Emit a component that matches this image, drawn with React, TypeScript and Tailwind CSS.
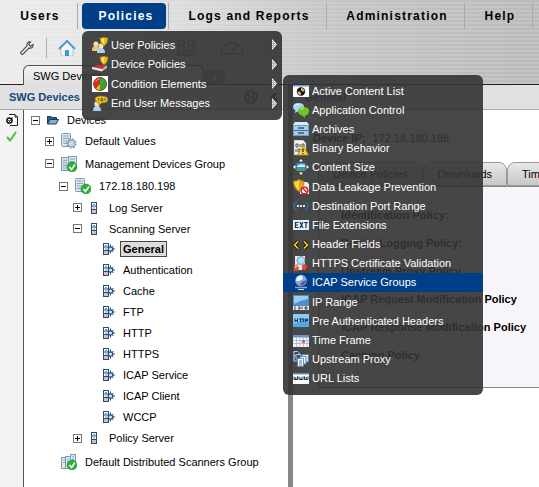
import type { ReactNode } from 'react';
import { clsx } from 'clsx';

/* ---------- icons ---------- */

interface IconProps {
  children: ReactNode;
  size?: string;
  box?: string;
}

function Icon({ children, size = 'w-4 h-4', box = '0 0 16 16' }: IconProps) {
  return (
    <svg viewBox={box} className={clsx('block shrink-0', size)} aria-hidden="true">
      {children}
    </svg>
  );
}

function Shield({ x = 0, y = 0 }: { x?: number; y?: number }) {
  return (
    <g transform={`translate(${x} ${y})`}>
      <path d="M0 1Q3 1 4 0Q5 1 8 1Q8 6 4 9Q0 6 0 1Z" fill="#eebc20" stroke="#a87808" strokeWidth=".6" />
      <path d="M1 2Q3 2 4 1V7Q1 5 1 2Z" fill="#ffe46a" />
    </g>
  );
}

function UserPoliciesIcon() {
  return (
    <Icon>
      <path d="M0 13Q0 9 3.500 9Q7 9 8 12V14H0Z" fill="#e8c978" />
      <circle cx="4" cy="7" r="2.6" fill="#f7dcb0" />
      <path d="M5 16Q5 11 9 11Q13 11 13 16Z" fill="#a8d4f2" />
      <circle cx="9" cy="9" r="2.5" fill="#f9e2c4" />
      <Shield x={8} y={0} />
    </Icon>
  );
}

function DevicePoliciesIcon() {
  return (
    <Icon>
      <path d="M0 11L5 9H15L10 13Z" fill="#c9303c" />
      <path d="M0 11L10 13V15.500L0 13Z" fill="#eeeef0" />
      <path d="M10 13L15 9V12L10 15.500Z" fill="#b9b9c0" />
      <Shield x={8} y={0} />
    </Icon>
  );
}

function ConditionIcon() {
  return (
    <Icon>
      <rect width="16" height="16" fill="#fff" />
      <circle cx="8" cy="8" r="6.5" fill="#d82c1c" />
      <path d="M8 1.500A6.500 6.500 0 0 1 8 14.500Z" fill="#2faa2d" />
      <path d="M8 8L3.500 13A6.500 6.500 0 0 0 8 14.500Z" fill="#f2b821" />
      <circle cx="8" cy="8" r="6.5" fill="none" stroke="#6b3a1c" strokeWidth=".8" />
      <path d="M3.500 6Q5 3 7.500 3" stroke="#ff9a86" fill="none" />
    </Icon>
  );
}

function MessagesIcon() {
  return (
    <Icon>
      <path d="M1 16Q1 11 5 11Q9 11 9 16Z" fill="#a8d4f2" />
      <circle cx="5" cy="9" r="2.7" fill="#f7d9b4" />
      <path d="M3 4Q3 1 9 1Q16 1 16 4.500Q16 8 10 8L7 10V8Q3 7 3 4Z" fill="#f0c22c" stroke="#8a6508" strokeWidth=".6" />
      <path d="M6 3L7 6M9 3V6M9 3Q11.500 3 11 6H9M13 3V6" stroke="#5b4305" fill="none" strokeWidth=".8" />
    </Icon>
  );
}

function ActiveContentIcon() {
  return (
    <Icon>
      <rect y="2" width="16" height="12" fill="#fff" />
      <rect y="2" width="16" height="1.5" fill="#6f9bd8" />
      <circle cx="8" cy="8.500" r="4.2" fill="#111" />
      <path d="M8 8.500V5A3.500 3.500 0 0 1 11.500 8.500ZM8 8.500V12A3.500 3.500 0 0 1 4.500 8.500Z" fill="#d7b56c" />
      <circle cx="8" cy="8.500" r="1" fill="#111" />
    </Icon>
  );
}

function ApplicationIcon() {
  return (
    <Icon>
      <path d="M0 5Q0 1 5.500 1Q11 1 11 5Q11 9 5.500 9L2 11L2.500 8.500Q0 7 0 5Z" fill="#a8d8f8" />
      <path d="M2 4Q3 2 6 2" stroke="#fff" fill="none" />
      <path d="M5 9Q5 5 10.500 5Q16 5 16 9Q16 13 12 13.500L12 16L9 13.500Q5 12 5 9Z" fill="#6cc722" />
      <path d="M7 8Q8 6 11 6" stroke="#d2f7a1" fill="none" />
    </Icon>
  );
}

function ArchivesIcon() {
  return (
    <Icon>
      <path d="M2 1H14L16 4V15H0V4Z" fill="#a9cbe8" />
      <path d="M2 1H14L16 4H0Z" fill="#d8ebf8" />
      <path d="M0 9.500H16" stroke="#476f96" />
      <path d="M.5 4.500H15.500V14.500H.5Z" stroke="#6f9cc5" fill="none" />
      <path d="M5 7H11M5 12H11" stroke="#30587e" strokeWidth="1.500" />
    </Icon>
  );
}

function BinaryIcon() {
  return (
    <Icon>
      <path d="M1 0H10L13 3V15H1Z" fill="#f2f2f0" stroke="#888" strokeWidth=".5" />
      <path d="M3 4H5V7H3ZM7 4V7M9 4H11V7H9ZM3 9V12M5 9H7V12H5Z" stroke="#444" fill="none" strokeWidth=".9" />
      <path d="M10 5.500L15.500 15H4.500Z" fill="#f8d838" stroke="#a88410" strokeWidth=".7" />
      <path d="M10 8.500V12M10 13V14" stroke="#222" strokeWidth="1.300" />
    </Icon>
  );
}

function ContentSizeIcon() {
  return (
    <Icon>
      <rect x="3.500" y="4" width="9" height="8" fill="#3d8de0" />
      <path d="M4 7Q7 4 12 6V8H4Z" fill="#d6efff" />
      <path d="M3.500 10H12.500V12H3.500Z" fill="#48a54a" />
      <path d="M8 0L10 2.500H6ZM8 16L10 13.500H6ZM0 8L2.500 6V10ZM16 8L13.500 6V10Z" fill="#fff" />
    </Icon>
  );
}

function LeakageIcon() {
  return (
    <Icon>
      <path d="M7 3H14L16 5V15H7Z" fill="#efefef" />
      <path d="M0 2Q4 2 6 0Q8 2 11 2Q11 9 6 13Q0 9 0 2Z" fill="#dba61e" stroke="#90680a" strokeWidth=".6" />
      <path d="M1.500 3Q4 3 6 1.500V11Q2 8 1.500 3Z" fill="#f8d658" />
      <circle cx="11.500" cy="11.500" r="3.300" fill="#fff" stroke="#d8222a" strokeWidth="1.500" />
      <path d="M9.500 9L14 13.500" stroke="#d8222a" strokeWidth="1.500" />
    </Icon>
  );
}

function PortRangeIcon() {
  return (
    <Icon>
      <path d="M4 4Q1 5 1 8Q1 11 4 12M12 4Q15 5 15 8Q15 11 12 12" stroke="#3d6288" strokeWidth="1.600" fill="none" />
      <path d="M4 7H6V9H4ZM7 7H9V9H7ZM10 7H12V9H10Z" fill="#cfe8fb" />
    </Icon>
  );
}

function ExtensionsIcon() {
  return (
    <Icon>
      <rect y="3" width="16" height="10" fill="#e4f1fb" />
      <path d="M5.500 5.500H2.500V10.500H5.500M2.500 8H5M7 5L10 11M10 5L7 11M11 5.500H15M13 5.500V11" stroke="#14344f" strokeWidth="1.200" fill="none" />
    </Icon>
  );
}

function HeaderFieldsIcon() {
  return (
    <Icon>
      <path d="M5 5.500L1.500 9L5 12.500M11 5.500L14.500 9L11 12.500" stroke="#191300" strokeWidth="3.500" fill="none" />
      <path d="M5 5.500L1.500 9L5 12.500M11 5.500L14.500 9L11 12.500" stroke="#eed22c" strokeWidth="1.700" fill="none" />
    </Icon>
  );
}

function CertificateIcon() {
  return (
    <Icon>
      <path d="M2 1H12V15H2Z" fill="#e3eaf1" />
      <path d="M1 10L6 12L5 16H1Z" fill="#d0552e" />
      <circle cx="8" cy="5.500" r="3.8" fill="#b5dcf6" stroke="#7fa6c6" strokeWidth="1.200" />
      <path d="M5.500 8.500L2 13" stroke="#e59970" strokeWidth="2" />
      <path d="M9 16L10 12H13L14 16L11.500 14.500Z" fill="#b91e20" />
      <circle cx="11.500" cy="11.500" r="2.500" fill="#e04a38" />
    </Icon>
  );
}

function GlobeIcon() {
  return (
    <Icon>
      <circle cx="8" cy="6.500" r="5.800" fill="#8da6d8" />
      <path d="M3.500 4Q5.500 1 9 1.500L10 5L6 7L3 7Z" fill="#f2f6ff" />
      <path d="M9 8L13 6Q13 10 9 12L7 10Z" fill="#4661a6" />
      <path d="M2 13.500H14" stroke="#9aa3b4" strokeWidth="1.500" />
      <path d="M5 15.500H11" stroke="#dce2ed" />
    </Icon>
  );
}

function IpRangeIcon() {
  return (
    <Icon>
      <rect width="16" height="11" y="1" fill="#4d8fcb" />
      <path d="M1 2H15V5Q8 6 1 10Z" fill="#9dcbee" />
      <rect y="12" width="16" height="4" fill="#e7e7e7" />
      <path d="M2 12V16M5 13H7V15H5M9 12.500V15M12 13H14V15H12Z" stroke="#333" fill="none" strokeWidth=".9" />
    </Icon>
  );
}

function HttpIcon() {
  return (
    <Icon>
      <rect width="16" height="13" y="1" fill="#5ba6de" />
      <path d="M0 1H16V6Q8 7 0 11Z" fill="#8fcaf2" />
      <path d="M3 15H13" stroke="#2c5b86" />
      <path d="M2 5.500V9M2 7.500H4M4.500 5.500V9M6 6H9M7.500 6V9M9 6H11.500M10.300 6V9M12.500 9V6H14.500V7.500H12.500" stroke="#0e3356" fill="none" />
    </Icon>
  );
}

function CalendarIcon() {
  return (
    <Icon>
      <rect y="3" width="16" height="12" fill="#f3f7fc" />
      <rect y="3" width="16" height="2.5" fill="#5f94d2" />
      <path d="M0 8.500H16M0 11.500H16M3.500 5V15M7 5V15M10.500 5V15M14 5V15" stroke="#a0b7cf" strokeWidth=".8" />
      <rect x="9" y="8" width="3" height="3" fill="#e25f5a" />
    </Icon>
  );
}

function ProxyIcon() {
  return (
    <Icon>
      <path d="M5 .5H1V4.500H5M1 4V10H5M6 1.500V4" stroke="#9fc8ea" strokeWidth="1.200" fill="none" />
      <path d="M3 3.500H8V8H3Z" fill="#2c5680" stroke="#b7d8f0" strokeWidth=".8" />
      <path d="M9 3.500H15.500V11H9Z" fill="#dbeaf7" stroke="#4a7cac" strokeWidth=".8" />
      <path d="M7 5.500H13V13H7Z" fill="#e8f2fb" stroke="#4a7cac" strokeWidth=".8" />
      <path d="M4.500 7.500H10.500V15.500H4.500Z" fill="#f4f9fd" stroke="#4a7cac" strokeWidth=".8" />
      <path d="M6 10H9M6 12H9M6 14H9" stroke="#3a6898" strokeWidth=".8" />
    </Icon>
  );
}

function UrlIcon() {
  return (
    <Icon>
      <rect y="3" width="16" height="11" fill="#fff" />
      <rect y="3" width="16" height="1.5" fill="#6691ba" />
      <path d="M1 6.500V9.500H4.500V6.500M2.800 7V9.500M6 6.500V9.500H10V6.500M8 7V9.500M11.500 6.500V9.500H15V6.500M13.300 7V9.500" stroke="#18334b" fill="none" />
    </Icon>
  );
}

function ServerGlyph() {
  return (
    <>
      <rect x=".5" y=".5" width="9" height="13" rx="1" fill="#dbe7f2" stroke="#7d9ab5" />
      <path d="M2 3H8M2 5.500H8M2 8H8M2 10.500H8" stroke="#8ba5bd" />
    </>
  );
}

function CheckBadge() {
  return (
    <g transform="translate(6 6)">
      <circle cx="5" cy="5" r="5" fill="#2cb23a" stroke="#178526" strokeWidth=".5" />
      <path d="M2.500 5L4.500 7.500L8 2.500" stroke="#fff" strokeWidth="1.500" fill="none" />
    </g>
  );
}

function DefaultValuesIcon() {
  return (
    <Icon>
      <ServerGlyph />
      <circle cx="10.500" cy="10.500" r="3.400" fill="#eef3f8" stroke="#8097ad" strokeWidth="1.200" />
      <circle cx="10.500" cy="10.500" r="4.600" fill="none" stroke="#8097ad" strokeWidth="1.200" strokeDasharray="1.800 1.810" />
      <circle cx="10.500" cy="10.500" r="1.300" fill="#fff" stroke="#8097ad" strokeWidth=".8" />
    </Icon>
  );
}

function GroupIcon() {
  return (
    <Icon>
      <rect x=".5" y="1.500" width="7" height="13" fill="#cfdeeb" stroke="#7d9ab5" />
      <rect x="7.500" y=".5" width="8" height="12" fill="#dbe7f2" stroke="#7d9ab5" />
      <path d="M2 4.500H6M2 7H6M2 9.500H6M2 12H6M9 3H14M9 5.500H14" stroke="#8ba5bd" />
      <CheckBadge />
    </Icon>
  );
}

function ScannersGroupIcon() {
  return (
    <Icon>
      <rect x=".5" y="3.500" width="5" height="11" fill="#dbe7f2" stroke="#7d9ab5" />
      <rect x="4.500" y="2.500" width="5" height="12" fill="#dbe7f2" stroke="#7d9ab5" />
      <rect x="9.500" y=".5" width="5" height="12" fill="#dbe7f2" stroke="#7d9ab5" />
      <path d="M2 6H4M2 8.500H4M6 5H8M6 7.500H8M11 3H13M11 5.500H13" stroke="#8ba5bd" />
      <CheckBadge />
    </Icon>
  );
}

function DeviceIcon() {
  return (
    <Icon>
      <ServerGlyph />
      <CheckBadge />
    </Icon>
  );
}

function RackGlyph() {
  return (
    <>
      <rect x=".5" y=".5" width="5" height="11" fill="#fff" stroke="#1f4e79" />
      <path d="M1 4H5M1 7.500H5" stroke="#1f4e79" />
      <path d="M2 2.500H4M2 6H4" stroke="#5a9bd0" />
      <rect x="1" y="8" width="4" height="3" fill="#f0b5b2" />
    </>
  );
}

function RackIcon() {
  return (
    <Icon size="w-[6px] h-3" box="0 0 6 12">
      <RackGlyph />
    </Icon>
  );
}

function ServiceIcon() {
  return (
    <Icon size="w-3 h-3" box="0 0 12 12">
      <RackGlyph />
      <path d="M7.500 1.500V10.500M5 6H12M5 3.500L10.500 9M10.500 3L5 8.500" stroke="#1f4e79" />
      <circle cx="7.500" cy="6" r="2.200" fill="#d6e9f7" stroke="#1f4e79" strokeWidth="1.200" />
    </Icon>
  );
}

function FolderIcon() {
  return (
    <Icon size="w-3 h-[10px]" box="0 0 12 10">
      <path d="M.5 9V1.500H4L5 2.500H9.500V4.500" fill="#2c5f8f" stroke="#12395e" />
      <path d="M.5 9L3 4.500H11.500L9 9Z" fill="#7fb2dc" stroke="#12395e" />
    </Icon>
  );
}

function Arrow() {
  return (
    <Icon size="w-[5px] h-[11px]" box="0 0 5 11">
      <path d="M0 0L5 5.500L0 11Z" fill="#aaa" />
      <path d="M.5 1V10M2.500 3V8" stroke="#fff" strokeDasharray="1 1" />
      <path d="M0 .5L4.500 5.500L0 10.500" stroke="#fff" strokeWidth=".8" fill="none" />
    </Icon>
  );
}

/* ---------- data ---------- */

const navItems = [
  { label: 'Users', width: 'w-[76px]' },
  { label: 'Policies', width: 'ml-1 mr-px w-[84px]', active: true },
  { label: 'Logs and Reports', width: 'w-[156px]' },
  { label: 'Administration', width: 'w-[136px]' },
  { label: 'Help', width: 'w-[66px]' },
];

const policyMenu = [
  { label: 'User Policies', icon: <UserPoliciesIcon /> },
  { label: 'Device Policies', icon: <DevicePoliciesIcon /> },
  { label: 'Condition Elements', icon: <ConditionIcon /> },
  { label: 'End User Messages', icon: <MessagesIcon /> },
];

const conditionMenu = [
  { label: 'Active Content List', icon: <ActiveContentIcon /> },
  { label: 'Application Control', icon: <ApplicationIcon /> },
  { label: 'Archives', icon: <ArchivesIcon /> },
  { label: 'Binary Behavior', icon: <BinaryIcon /> },
  { label: 'Content Size', icon: <ContentSizeIcon /> },
  { label: 'Data Leakage Prevention', icon: <LeakageIcon /> },
  { label: 'Destination Port Range', icon: <PortRangeIcon /> },
  { label: 'File Extensions', icon: <ExtensionsIcon /> },
  { label: 'Header Fields', icon: <HeaderFieldsIcon /> },
  { label: 'HTTPS Certificate Validation', icon: <CertificateIcon /> },
  { label: 'ICAP Service Groups', icon: <GlobeIcon />, active: true },
  { label: 'IP Range', icon: <IpRangeIcon /> },
  { label: 'Pre Authenticated Headers', icon: <HttpIcon /> },
  { label: 'Time Frame', icon: <CalendarIcon /> },
  { label: 'Upstream Proxy', icon: <ProxyIcon /> },
  { label: 'URL Lists', icon: <UrlIcon /> },
];

const services = ['Authentication', 'Cache', 'FTP', 'HTTP', 'HTTPS', 'ICAP Service', 'ICAP Client', 'WCCP'];

const policyLabels = [
  'Identification Policy:',
  'Device Logging Policy:',
  'Upstream Proxy Policy',
  'ICAP Request Modification Policy',
  'ICAP Response Modification Policy',
  'Caching Policy',
];

/* ---------- pieces ---------- */

interface TreeRowProps {
  label: string;
  icon: ReactNode;
  toggle?: '+' | '-';
  indent: string;
  height?: string;
  iconBox?: string;
  selected?: boolean;
}

function TreeRow({ label, icon, toggle, indent, height = 'h-[21px]', iconBox = 'w-6', selected }: TreeRowProps) {
  return (
    <li className={clsx('flex items-center whitespace-nowrap', indent, height)}>
      {toggle && (
        <button
          type="button"
          aria-label={toggle === '+' ? `Expand ${label}` : `Collapse ${label}`}
          className="mr-[7px] h-[9px] w-[9px] shrink-0 border border-[#777] bg-white"
        >
          <svg viewBox="0 0 7 7" className="block h-[7px] w-[7px]">
            <path d={toggle === '+' ? 'M1 3.500H6M3.500 1V6' : 'M1 3.500H6'} stroke="#000" />
          </svg>
        </button>
      )}
      <span className={clsx('flex shrink-0', iconBox)}>{icon}</span>
      <span
        className={clsx(
          selected && '-ml-[3px] border border-[#444] bg-[#dcdcdc] px-[2px] font-bold leading-[14px]'
        )}
      >
        {label}
      </span>
    </li>
  );
}

function NavBar() {
  return (
    <nav className="flex h-[31px] items-start pt-[3px]">
      {navItems.map((item) => (
        <div key={item.label} className="flex h-[26px] shrink-0 border-r border-[#aaa] pr-px">
          <button
            type="button"
            className={clsx(
              'h-[26px] rounded pl-1 text-center text-xs font-bold tracking-widest whitespace-nowrap',
              item.width,
              item.active ? 'bg-[#003f87] text-white' : 'text-black'
            )}
          >
            {item.label}
          </button>
        </div>
      ))}
    </nav>
  );
}

function Toolbar() {
  return (
    <div className="flex h-[34px] items-center pl-5">
      <button type="button" aria-label="Settings">
        <Icon size="w-[14px] h-[14px]">
          <path d="M2.500 13.500L9 7" stroke="#444" strokeWidth="4.500" strokeLinecap="round" />
          <path d="M12 1Q7 1 8 6L10 8Q15 9 15 4L12 6L10 4Z" fill="#ddd" stroke="#444" strokeWidth="1.200" />
          <path d="M2.500 13.500L9.500 6.500" stroke="#eee" strokeWidth="2" strokeLinecap="round" />
        </Icon>
      </button>
      <span className="ml-3 h-5 w-px bg-[#aaa]" />
      <button type="button" aria-label="Home" className="ml-[11px]">
        <Icon size="w-[18px] h-4" box="0 0 18 16">
          <path d="M3 8L9 2L15 8V16H3Z" fill="#f2f8fc" stroke="#9bb4c6" strokeWidth=".7" />
          <path d="M1 9L9 1L17 9" stroke="#4d9bcb" strokeWidth="2" fill="none" />
          <rect x="7" y="10" width="4" height="6" fill="#3f9bd0" />
        </Icon>
      </button>
      <div className="ml-14 flex items-center gap-6 text-[#888]">
        <Icon size="w-5 h-4" box="0 0 20 16">
          <path d="M1 10L6 3L10 8L14 3L19 12" stroke="currentColor" strokeWidth="2" fill="none" />
        </Icon>
        <Icon size="w-5 h-4" box="0 0 20 16">
          <path d="M2 1H8V12H2ZM12 1H18V12H12ZM2 5H8M12 5H18M0 15H20" stroke="currentColor" strokeWidth="1.500" fill="none" />
        </Icon>
        <Icon size="w-6 h-4" box="0 0 24 16">
          <path d="M1 14A11 11 0 0 1 23 14Z" stroke="currentColor" strokeWidth="1.500" fill="#ddd" />
          <path d="M12 12L17 6" stroke="currentColor" strokeWidth="2" />
        </Icon>
        <Icon size="w-3 h-3" box="0 0 12 12">
          <path d="M1 2L5 6L1 10M6 2L10 6L6 10" stroke="#aaa" strokeWidth="2" fill="none" />
        </Icon>
      </div>
    </div>
  );
}

function TitleBar() {
  return (
    <div className="flex h-[26px] items-stretch border-t border-b border-t-[#222] border-b-[#aaa] bg-[#e0e0e0] font-bold text-[#17477e]">
      <div className="flex w-72 shrink-0 items-center pr-[10px] pl-[9px]">
        <h2 className="flex-1">SWG Devices</h2>
        <button type="button" aria-label="Refresh" className="mr-3">
          <Icon size="w-[14px] h-[14px]" box="0 0 14 14">
            <circle cx="7" cy="7" r="6" fill="none" stroke="#17477e" strokeWidth="1.500" />
            <path d="M5 11V4L3 6M9 3V10L11 8M5 7H9" stroke="#17477e" strokeWidth="1.300" fill="none" />
          </Icon>
        </button>
        <button type="button" aria-label="Collapse panel">
          <Icon size="w-2 h-[10px]" box="0 0 8 10">
            <path d="M6.500 1L2 5L6.500 9" stroke="#17477e" strokeWidth="2.500" fill="none" />
          </Icon>
        </button>
      </div>
      <div className="w-[5px] shrink-0 bg-[#888]" />
      <h2 className="flex-1 self-center pl-3">General</h2>
    </div>
  );
}

interface MenuItem {
  label: string;
  icon: ReactNode;
  active?: boolean;
}

function MenuList({ items, arrows }: { items: MenuItem[]; arrows?: boolean }) {
  return (
    <ul className="flex h-full flex-col">
      {items.map((item) => (
        <li key={item.label} className={clsx('flex flex-1', item.active && 'bg-[#003f87]')}>
          <button
            type="button"
            className="flex w-full items-center gap-[3px] pr-[5px] pl-[10px] text-left whitespace-nowrap text-white"
          >
            {item.icon}
            <span className="flex-1">{item.label}</span>
            {arrows && <Arrow />}
          </button>
        </li>
      ))}
    </ul>
  );
}

function DeviceTree() {
  return (
    <ul className="w-[264px] shrink-0 bg-white">
      <TreeRow label="Devices" icon={<FolderIcon />} toggle="-" indent="pl-[7px]" height="h-5" iconBox="w-5" />
      <TreeRow label="Default Values" icon={<DefaultValuesIcon />} toggle="+" indent="pl-[21px]" height="h-[22px]" />
      <TreeRow label="Management Devices Group" icon={<GroupIcon />} toggle="-" indent="pl-[21px]" height="h-[23px]" />
      <TreeRow label="172.18.180.198" icon={<DeviceIcon />} toggle="-" indent="pl-[35px]" height="h-[22px]" />
      <TreeRow label="Log Server" icon={<RackIcon />} toggle="+" indent="pl-[49px]" iconBox="w-4 ml-[2px] mr-[2px]" />
      <TreeRow label="Scanning Server" icon={<RackIcon />} toggle="-" indent="pl-[49px]" iconBox="w-4 ml-[2px] mr-[2px]" />
      <TreeRow label="General" icon={<ServiceIcon />} indent="pl-[79px]" height="h-5" iconBox="w-5" selected />
      {services.map((name) => (
        <TreeRow key={name} label={name} icon={<ServiceIcon />} indent="pl-[79px]" iconBox="w-5" />
      ))}
      <TreeRow label="Policy Server" icon={<RackIcon />} toggle="+" indent="pl-[49px]" height="h-[22px]" iconBox="w-4 ml-[2px] mr-[2px]" />
      <TreeRow label="Default Distributed Scanners Group" icon={<ScannersGroupIcon />} indent="pl-[37px]" height="h-[26px]" />
    </ul>
  );
}

function GeneralPanel() {
  return (
    <main className="min-w-0 flex-1 overflow-hidden bg-white pt-5 pl-5">
      <p className="flex h-4 items-center gap-[7px] whitespace-nowrap">
        <b>Device IP:</b>
        <span>172.18.180.198</span>
      </p>
      <div className="mt-4 ml-[5px] flex h-6">
        {['Device Policies', 'Downloads', 'Time Settings'].map((tab) => (
          <button
            key={tab}
            type="button"
            className="shrink-0 rounded-t-lg border border-[#999] bg-gradient-to-b from-[#e8e8e8] to-[#c8c8c8] px-[14px] whitespace-nowrap"
          >
            {tab}
          </button>
        ))}
      </div>
      <ul className="ml-[5px] border-y border-l border-[#888] bg-[#f7f5fa] pt-[14px] pb-[18px] pl-[22px] font-bold">
        {policyLabels.map((label) => (
          <li key={label} className="flex h-7 items-center whitespace-nowrap">
            {label}
          </li>
        ))}
      </ul>
    </main>
  );
}

export default function App() {
  return (
    <div className="relative flex min-h-screen flex-col overflow-hidden bg-white font-['Liberation_Sans',Arial,sans-serif] text-[11px] leading-4 text-black">
      <header className="bg-[repeating-linear-gradient(0deg,rgba(255,255,255,0.12)_0px,rgba(255,255,255,0.12)_2px,transparent_2px,transparent_4px),linear-gradient(90deg,#ececec_0%,#e2e2e2_25%,#c6c6c6_60%,#bababa_100%)]">
        <NavBar />
        <Toolbar />
        <div className="flex h-[19px] pl-[23px]">
          <button
            type="button"
            className="relative z-10 h-5 w-[181px] rounded-t-md border border-b-0 border-[#555] bg-gradient-to-b from-[#f2f2f2] to-[#e0e0e0] pl-[9px] text-left"
          >
            SWG Devices
          </button>
          <button type="button" aria-label="New tab" className="mt-[5px] ml-px h-[14px] w-5 rounded-sm bg-[#999] font-bold leading-[14px] text-white">
            +
          </button>
        </div>
      </header>

      <TitleBar />

      <div className="flex flex-1">
        <aside className="flex w-6 shrink-0 flex-col items-center gap-[5px] border-r border-[#555] bg-[#f2f2f2] pt-1">
          <Icon size="w-3 h-3" box="0 0 12 12">
            <path d="M3 .5H9L11.500 3V11.500H4" fill="#fff" stroke="#222" />
            <path d="M9 .5V3H11.500" fill="none" stroke="#222" />
            <circle cx="3.500" cy="6.500" r="2.600" fill="#fff" stroke="#111" strokeWidth="1.500" />
            <path d="M2.500 6L3.500 7.500L6.500 3.500" stroke="#111" fill="none" />
          </Icon>
          <Icon size="w-[11px] h-[11px]" box="0 0 11 11">
            <path d="M1 6L4 9.500L10 1" stroke="#4cbf3c" strokeWidth="2" fill="none" />
          </Icon>
        </aside>
        <DeviceTree />
        <div className="w-[5px] shrink-0 bg-[#888]" />
        <GeneralPanel />
      </div>

      <div className="absolute top-[31px] left-[82px] z-20 h-[89px] w-[200px] rounded-md bg-[#333]/90 pt-1 pb-[7px]">
        <MenuList items={policyMenu} arrows />
      </div>
      <div className="absolute top-[75px] left-[283px] z-20 h-[320px] w-[200px] rounded-md bg-[#333]/90 pt-[6px] pb-[7px]">
        <MenuList items={conditionMenu} />
      </div>
    </div>
  );
}
